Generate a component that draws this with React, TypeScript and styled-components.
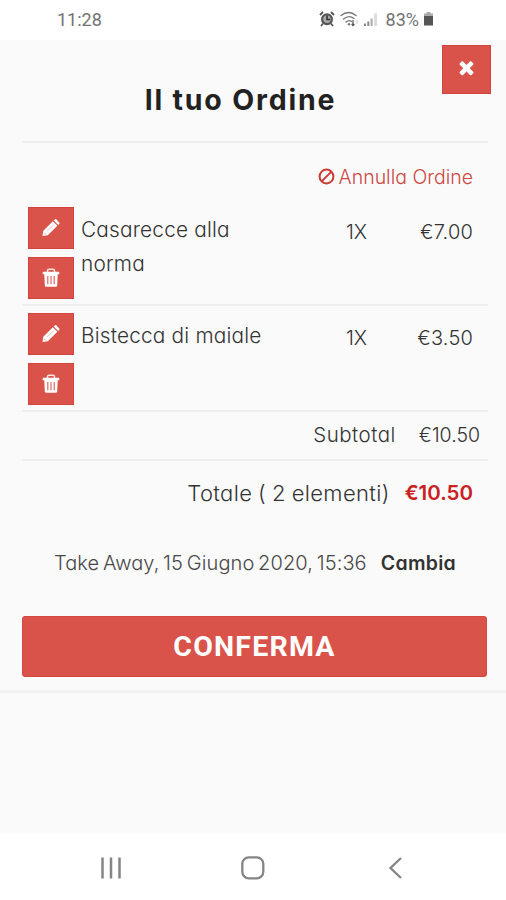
import React from "react";
import styled, { createGlobalStyle } from "styled-components";

const GlobalStyle = createGlobalStyle`
  * { box-sizing: border-box; }
  body {
    margin: 0;
    background: #fafafa;
    font-family: Inter, "Open Sans", sans-serif;
    font-feature-settings: "cv11" 1;
    font-weight: 300;
    color: #333;
  }
  button { border: 0; padding: 0; margin: 0; background: none; font: inherit; color: inherit; }
`;

const Screen = styled.div`
  width: 506px;
  height: 900px;
  display: flex;
  flex-direction: column;
  overflow: hidden;
  background: #fafafa;
  white-space: nowrap;
`;

const StatusBar = styled.header`
  height: 40px;
  flex: none;
  display: flex;
  align-items: center;
  justify-content: space-between;
  padding: 0 72px 2px 57px;
  background: #fff;
  color: #737373;
  font-family: Roboto, sans-serif;
  font-weight: 400;
  font-size: 18px;
`;

const StatusIcons = styled.div`
  display: flex;
  align-items: center;
`;

const Battery = styled.span`
  margin: 0 4px 0 5px;
`;

const Main = styled.main`
  flex: 1;
  display: flex;
  flex-direction: column;
`;

const Order = styled.section`
  position: relative;
  height: 653px;
  padding: 0 18px 0 22px;
  border-bottom: 3px solid #f2f2f2;
`;

const CloseButton = styled.button`
  position: absolute;
  top: 5px;
  right: 15px;
  width: 49px;
  height: 49px;
  display: grid;
  place-items: center;
  padding: 0 0 4px;
  background: #d9534a;
  border: 1px solid #d3443d;
  color: #fff;
`;

const Heading = styled.div`
  height: 103px;
  display: flex;
  justify-content: center;
  align-items: flex-end;
  padding: 0 0 21px;
  border-bottom: 2px solid #eeeeee;
`;

const Title = styled.h1`
  margin: 0 29px 0 0;
  font-size: 28.5px;
  line-height: 40px;
  font-weight: 700;
  letter-spacing: 1.8px;
  color: #222;
`;

const CancelRow = styled.div`
  height: 57px;
  display: flex;
  justify-content: flex-end;
  align-items: center;
  gap: 4px;
  padding: 10px 15px 0 0;
  color: #cd4743;
  font-size: 19.5px;
`;

const Item = styled.div`
  height: 106px;
  display: grid;
  grid-template-columns: 46px 238px 60px 1fr;
  padding: 7px 15px 0 6px;
  border-bottom: 2px solid #eeeeee;
  font-size: 20px;
  line-height: 34px;
`;

const Actions = styled.div`
  display: flex;
  flex-direction: column;
  gap: 8px;
`;

const ActionButton = styled.button`
  width: 46px;
  height: 42px;
  display: grid;
  place-items: center;
  padding-bottom: 1px;
  background: #d9534a;
  border: 1px solid #d3443d;
  color: #fff;
`;

const Name = styled.div`
  width: 190px;
  padding: 6px 0 0 7px;
  white-space: normal;
  font-size: 20.8px;
  letter-spacing: 0.2px;
`;

const Quantity = styled.div`
  padding: 8px 0 0 34px;
`;

const Price = styled.div`
  padding-top: 8px;
  text-align: right;
  letter-spacing: 0.2px;
`;

const Subtotal = styled.div`
  height: 49px;
  display: flex;
  justify-content: flex-end;
  align-items: center;
  gap: 23px;
  padding: 0 8px 2px 0;
  border-bottom: 2px solid #eeeeee;
  font-size: 19.5px;
`;

const SubtotalLabel = styled.span`
  font-size: 20.5px;
  letter-spacing: 0.5px;
`;

const Total = styled.div`
  height: 63px;
  display: flex;
  justify-content: flex-end;
  align-items: center;
  gap: 15px;
  padding-right: 15px;
`;

const TotalLabel = styled.span`
  font-size: 22px;
  letter-spacing: 0.35px;
  word-spacing: -0.7px;
`;

const TotalPrice = styled.strong`
  font-size: 20.5px;
  font-weight: 600;
  color: #ca211f;
`;

const Delivery = styled.div`
  height: 78px;
  display: flex;
  justify-content: center;
  align-items: center;
  gap: 14px;
  font-size: 19.5px;
  color: #484848;
`;

const When = styled.span`
  font-size: 20px;
  letter-spacing: 0.1px;
  word-spacing: -2px;
`;

const Change = styled.button`
  font-weight: 600;
  letter-spacing: 0.3px;
  color: #333;
`;

const Confirm = styled.button`
  display: block;
  width: 465px;
  height: 61px;
  margin-top: 14px;
  border-radius: 4px;
  background: #d9534a;
  box-shadow: inset 0 0 0 1px #d54840;
  color: #fff;
  font-family: Roboto, sans-serif;
  font-weight: 700;
  font-size: 28.5px;
  line-height: 61px;
  letter-spacing: 1.2px;
`;

const NavBar = styled.nav`
  height: 67px;
  flex: none;
  display: grid;
  grid-template-columns: 1fr 62px 1fr;
  align-items: center;
  justify-items: center;
  padding-top: 2px;
  background: #fff;
`;

const TIMES =
  "M1490 1322q0 40-28 68l-136 136q-28 28-68 28t-68-28l-294-294-294 294q-28 28-68 28t-68-28l-136-136q-28-28-28-68t28-68l294-294-294-294q-28-28-28-68t28-68l136-136q28-28 68-28t68 28l294 294 294-294q28-28 68-28t68 28l136 136q28 28 28 68t-28 68l-294 294 294 294q28 28 28 68z";

const TimesIcon = () => (
  <svg width="21" height="21" viewBox="0 0 1792 1792" fill="currentColor">
    <path d={TIMES} />
  </svg>
);

const PencilIcon = () => (
  <svg width="20" height="20" viewBox="0 0 20 20" fill="none">
    <path d="M1.500 18l.8-5.300L11.800 3.300l4.500 4.500-9.500 9.400z" fill="#fff" />
    <path d="M12.700 2.400l1.100-1q.8-.6 1.600.1l2.800 2.900q.7.800.1 1.600l-1.100 1z" fill="#fff" />
    <path d="M6.300 13l6.400-6.400" stroke="#efbcb8" strokeWidth="1" />
    <path d="M3.300 15l1.500 1.500" stroke="#e69a95" strokeWidth="1" />
  </svg>
);

const TrashIcon = () => (
  <svg width="18" height="20" viewBox="0 0 18 20" fill="none">
    <path d="M5.500 4V2.800q0-1.500 1.500-1.500h4q1.500 0 1.500 1.500V4" stroke="#fbe5e3" strokeWidth="1.500" />
    <path d="M1.500 3.800h15q.8 0 .8.900v1.600H.7V4.700q0-.9.800-.9z" fill="#fff" />
    <path d="M2.300 6h13.400l-.5 11.300q-.1 1.500-1.600 1.500H4.400q-1.500 0-1.600-1.500z" fill="#fff" />
    <path d="M5.800 8v8.200M9 8v8.200M12.200 8v8.200" stroke="#dc6a63" strokeWidth="1.200" />
  </svg>
);

const PhoneStatus = () => (
  <svg width="62" height="18" viewBox="-1 0 62 18" fill="none">
    <circle cx="7" cy="9.200" r="4.900" fill="#aaa" stroke="#555" strokeWidth="2.200" />
    <path d="M0 5l3-3M14 5l-3-3M3 13.500L1 16M11 13.500l2 2.500" stroke="#555" strokeWidth="1.800" />
    <path d="M7 5.500v4h3" stroke="#333" strokeWidth="1.600" />
    <g stroke="#777" strokeWidth="1.400" strokeLinecap="round">
      <path d="M21 5.500q7.500-6 15 0" />
      <path d="M23.500 9q5.500-4.500 10.500-.5" />
      <path d="M26 12q3-2.500 5.500-.5" />
    </g>
    <circle cx="29" cy="14.300" r="1.200" fill="#777" />
    <path d="M33 10v5.500M31.600 14l1.400 1.500 1.400-1.500" stroke="#555" strokeWidth="1.200" />
    <path d="M37 14v-4" stroke="#ccc" />
    <path d="M45 16v-2.500M48.300 16v-4.500" stroke="#888" strokeWidth="2" />
    <path d="M51.600 16V8.500" stroke="#aaa" strokeWidth="2" />
    <path d="M55.500 16V3.500" stroke="#ddd" strokeWidth="3" />
  </svg>
);

const BatteryIcon = () => (
  <svg width="11" height="16" viewBox="0 0 11 16">
    <path d="M3.500 1h4v1.500H10V5H1V2.500h2.500z" fill="#aaa" />
    <path d="M1 5h9v9.500H1z" fill="#555" />
  </svg>
);

const BanIcon = () => (
  <svg width="17" height="17" viewBox="0 0 17 17" fill="none" stroke="#cc3a33" strokeWidth="2">
    <circle cx="8.500" cy="8.500" r="6.900" />
    <path d="M3.600 13.400l9.800-9.800" />
  </svg>
);

const items = [
  { name: "Casarecce alla norma", qty: "1X", price: "€7.00" },
  { name: "Bistecca di maiale", qty: "1X", price: "€3.50" },
];

export default function App() {
  return (
    <Screen>
      <GlobalStyle />
      <StatusBar>
        <span>11:28</span>
        <StatusIcons>
          <PhoneStatus />
          <Battery>83%</Battery>
          <BatteryIcon />
        </StatusIcons>
      </StatusBar>
      <Main>
        <Order>
          <CloseButton aria-label="Chiudi">
            <TimesIcon />
          </CloseButton>
          <Heading>
            <Title>Il tuo Ordine</Title>
          </Heading>
          <CancelRow>
            <BanIcon />
            <span>Annulla Ordine</span>
          </CancelRow>
          {items.map((item) => (
            <Item key={item.name}>
              <Actions>
                <ActionButton aria-label="Modifica">
                  <PencilIcon />
                </ActionButton>
                <ActionButton aria-label="Elimina">
                  <TrashIcon />
                </ActionButton>
              </Actions>
              <Name>{item.name}</Name>
              <Quantity>{item.qty}</Quantity>
              <Price>{item.price}</Price>
            </Item>
          ))}
          <Subtotal>
            <SubtotalLabel>Subtotal</SubtotalLabel>
            <span>€10.50</span>
          </Subtotal>
          <Total>
            <TotalLabel>Totale ( 2 elementi)</TotalLabel>
            <TotalPrice>€10.50</TotalPrice>
          </Total>
          <Delivery>
            <When>Take Away, 15 Giugno 2020, 15:36</When>
            <Change>Cambia</Change>
          </Delivery>
          <Confirm>CONFERMA</Confirm>
        </Order>
      </Main>
      <NavBar>
        <svg width="24" height="24" viewBox="0 0 24 24" stroke="#858585" strokeWidth="2.500">
          <path d="M3.500 1.500v21M12 1.500v21M20.500 1.500v21" />
        </svg>
        <svg width="24" height="24" viewBox="0 0 24 24" fill="none" stroke="#858585" strokeWidth="2.300">
          <rect x="1.300" y="1.300" width="21" height="21" rx="6.500" />
        </svg>
        <svg width="24" height="24" viewBox="0 0 24 24" fill="none" stroke="#858585" strokeWidth="2.300">
          <path d="M18 2L7.500 12 18 22" />
        </svg>
      </NavBar>
    </Screen>
  );
}
